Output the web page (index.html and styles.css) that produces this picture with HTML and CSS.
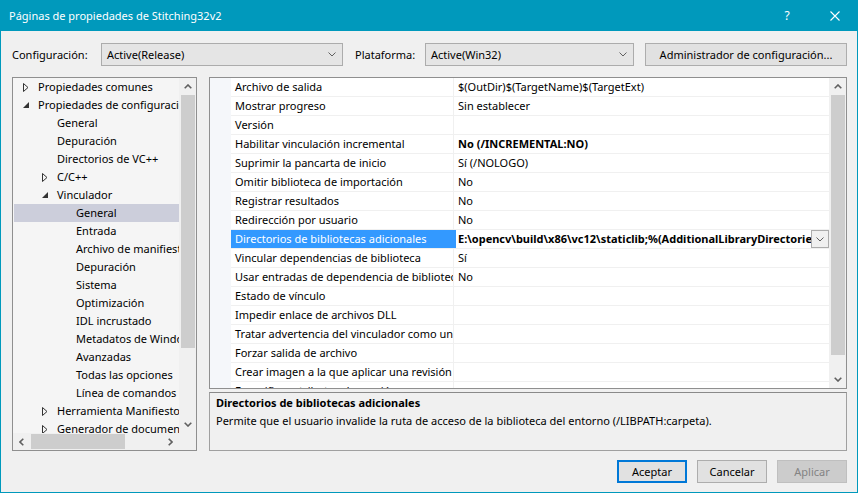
FILE: index.html
```html
<!DOCTYPE html>
<html lang="es">
<head>
<meta charset="utf-8">
<title>Páginas de propiedades de Stitching32v2</title>
<link rel="stylesheet" href="styles.css">
</head>
<body>
<div class="window">
  <div class="titlebar">
    <span class="title">Páginas de propiedades de Stitching32v2</span>
    <span class="capbtn help">?</span>
    <span class="capbtn close"><svg width="10" height="10" viewBox="0 0 10 10"><path d="M0.5 0.5 L9.5 9.5 M9.5 0.5 L0.5 9.5" stroke="#fff" stroke-width="1.1" fill="none"/></svg></span>
  </div>
  <div class="content">
    <div class="toolbar">
      <span class="lbl lbl-config">Configuración:</span>
      <div class="combo combo-config"><span>Active(Release)</span><svg class="chev" width="8" height="5" viewBox="0 0 8 5"><polyline points="0.5,0.5 4,4 7.5,0.5" fill="none" stroke="#606060" stroke-width="1"/></svg></div>
      <span class="lbl lbl-plat">Plataforma:</span>
      <div class="combo combo-plat"><span>Active(Win32)</span><svg class="chev" width="8" height="5" viewBox="0 0 8 5"><polyline points="0.5,0.5 4,4 7.5,0.5" fill="none" stroke="#606060" stroke-width="1"/></svg></div>
      <div class="btn btn-admin">Administrador de configuración...</div>
    </div>

    <div class="main">
      <div class="tree">
        <div class="tree-view">
          <div class="trow l0"><span class="tw"><svg width="6" height="9" viewBox="0 0 6 9"><polygon points="0.5,0.5 5,4.5 0.5,8.5" fill="none" stroke="#333" stroke-width="1"/></svg></span>Propiedades comunes</div>
          <div class="trow l0"><span class="tw"><svg width="7" height="7" viewBox="0 0 7 7"><polygon points="6,0 6,6 0,6" fill="#333"/></svg></span>Propiedades de configuración</div>
          <div class="trow l1"><span class="tw"></span>General</div>
          <div class="trow l1"><span class="tw"></span>Depuración</div>
          <div class="trow l1"><span class="tw"></span>Directorios de VC++</div>
          <div class="trow l1"><span class="tw"><svg width="6" height="9" viewBox="0 0 6 9"><polygon points="0.5,0.5 5,4.5 0.5,8.5" fill="none" stroke="#333" stroke-width="1"/></svg></span>C/C++</div>
          <div class="trow l1"><span class="tw"><svg width="7" height="7" viewBox="0 0 7 7"><polygon points="6,0 6,6 0,6" fill="#333"/></svg></span>Vinculador</div>
          <div class="trow l2 sel"><span class="tw"></span>General</div>
          <div class="trow l2"><span class="tw"></span>Entrada</div>
          <div class="trow l2"><span class="tw"></span>Archivo de manifiesto</div>
          <div class="trow l2"><span class="tw"></span>Depuración</div>
          <div class="trow l2"><span class="tw"></span>Sistema</div>
          <div class="trow l2"><span class="tw"></span>Optimización</div>
          <div class="trow l2"><span class="tw"></span>IDL incrustado</div>
          <div class="trow l2"><span class="tw"></span>Metadatos de Windows</div>
          <div class="trow l2"><span class="tw"></span>Avanzadas</div>
          <div class="trow l2"><span class="tw"></span>Todas las opciones</div>
          <div class="trow l2"><span class="tw"></span>Línea de comandos</div>
          <div class="trow l1"><span class="tw"><svg width="6" height="9" viewBox="0 0 6 9"><polygon points="0.5,0.5 5,4.5 0.5,8.5" fill="none" stroke="#333" stroke-width="1"/></svg></span>Herramienta Manifiesto</div>
          <div class="trow l1"><span class="tw"><svg width="6" height="9" viewBox="0 0 6 9"><polygon points="0.5,0.5 5,4.5 0.5,8.5" fill="none" stroke="#333" stroke-width="1"/></svg></span>Generador de documentos XML</div>
        </div>
        <div class="vscroll tree-vs">
          <div class="sarrow"><svg width="8" height="5" viewBox="0 0 8 5"><polyline points="0.7,4.3 4,1 7.3,4.3" fill="none" stroke="#606060" stroke-width="1.6"/></svg></div>
          <div class="vthumb tree-thumb"></div>
          <div class="strack"></div>
          <div class="sarrow"><svg width="8" height="5" viewBox="0 0 8 5"><polyline points="0.7,0.7 4,4 7.3,0.7" fill="none" stroke="#606060" stroke-width="1.6"/></svg></div>
        </div>
        <div class="hscroll">
          <div class="sarrow-h"><svg width="5" height="8" viewBox="0 0 5 8"><polyline points="4.3,0.7 1,4 4.3,7.3" fill="none" stroke="#606060" stroke-width="1.6"/></svg></div>
          <div class="hthumb"></div>
          <div class="strack"></div>
          <div class="sarrow-h"><svg width="5" height="8" viewBox="0 0 5 8"><polyline points="0.7,0.7 4,4 0.7,7.3" fill="none" stroke="#606060" stroke-width="1.6"/></svg></div>
        </div>
        <div class="corner"></div>
      </div>

      <div class="right">
        <div class="grid">
          <div class="grid-body">
            <div class="gutter"></div>
            <div class="props">
              <div class="prow"><div class="pname">Archivo de salida</div><div class="pval">$(OutDir)$(TargetName)$(TargetExt)</div></div>
              <div class="prow"><div class="pname">Mostrar progreso</div><div class="pval">Sin establecer</div></div>
              <div class="prow"><div class="pname">Versión</div><div class="pval"></div></div>
              <div class="prow"><div class="pname">Habilitar vinculación incremental</div><div class="pval b">No (/INCREMENTAL:NO)</div></div>
              <div class="prow"><div class="pname">Suprimir la pancarta de inicio</div><div class="pval">Sí (/NOLOGO)</div></div>
              <div class="prow"><div class="pname">Omitir biblioteca de importación</div><div class="pval">No</div></div>
              <div class="prow"><div class="pname">Registrar resultados</div><div class="pval">No</div></div>
              <div class="prow"><div class="pname">Redirección por usuario</div><div class="pval">No</div></div>
              <div class="prow sel"><div class="pname">Directorios de bibliotecas adicionales</div><div class="pval b edit"><span class="edit-text">E:\opencv\build\x86\vc12\staticlib;%(AdditionalLibraryDirectories)</span><span class="ddbtn"><svg width="8" height="5" viewBox="0 0 8 5"><polyline points="0.5,0.5 4,4 7.5,0.5" fill="none" stroke="#606060" stroke-width="1"/></svg></span></div></div>
              <div class="prow"><div class="pname">Vincular dependencias de biblioteca</div><div class="pval">Sí</div></div>
              <div class="prow"><div class="pname">Usar entradas de dependencia de biblioteca</div><div class="pval">No</div></div>
              <div class="prow"><div class="pname">Estado de vínculo</div><div class="pval"></div></div>
              <div class="prow"><div class="pname">Impedir enlace de archivos DLL</div><div class="pval"></div></div>
              <div class="prow"><div class="pname">Tratar advertencia del vinculador como un error</div><div class="pval"></div></div>
              <div class="prow"><div class="pname">Forzar salida de archivo</div><div class="pval"></div></div>
              <div class="prow"><div class="pname">Crear imagen a la que aplicar una revisión</div><div class="pval"></div></div>
              <div class="prow"><div class="pname">Especificar atributos de sección</div><div class="pval"></div></div>
            </div>
            <div class="vscroll grid-vs">
              <div class="sarrow"><svg width="8" height="5" viewBox="0 0 8 5"><polyline points="0.7,4.3 4,1 7.3,4.3" fill="none" stroke="#606060" stroke-width="1.6"/></svg></div>
              <div class="vthumb grid-thumb"></div>
              <div class="strack"></div>
              <div class="sarrow"><svg width="8" height="5" viewBox="0 0 8 5"><polyline points="0.7,0.7 4,4 7.3,0.7" fill="none" stroke="#606060" stroke-width="1.6"/></svg></div>
            </div>
          </div>
        </div>
        <div class="desc">
          <div class="desc-title">Directorios de bibliotecas adicionales</div>
          <div class="desc-text">Permite que el usuario invalide la ruta de acceso de la biblioteca del entorno (/LIBPATH:carpeta).</div>
        </div>
      </div>
    </div>

    <div class="buttons">
      <div class="btn dlg default">Aceptar</div>
      <div class="btn dlg">Cancelar</div>
      <div class="btn dlg disabled">Aplicar</div>
    </div>
  </div>
</div>
</body>
</html>
```

FILE: styles.css
```css
* { box-sizing: border-box; }
html, body { margin: 0; padding: 0; }
body {
  font-family: "Noto Sans", "Open Sans", sans-serif;
  font-size: 11px;
  color: #000;
  background: #fff;
}
.window {
  width: 858px;
  height: 493px;
  border: 1px solid #0099bc;
  border-top: 0;
  background: #f0f0f0;
  display: flex;
  flex-direction: column;
  overflow: hidden;
}
.titlebar {
  height: 31px;
  flex: none;
  margin: 0 -1px;
  background: #0099bc;
  color: #fff;
  display: flex;
  align-items: center;
  padding-left: 9px;
}
.title { flex: 1; font-size: 11px; }
.capbtn {
  width: 46px;
  height: 31px;
  display: flex;
  align-items: center;
  justify-content: center;
  font-size: 12px;
}
.help { padding-bottom: 1px; padding-right: 4px; }

.content {
  flex: 1;
  display: flex;
  flex-direction: column;
  padding: 12px 10px 0 11px;
}
.toolbar {
  height: 23px;
  display: flex;
  align-items: center;
}
.lbl { white-space: nowrap; }
.lbl-config { width: 89px; }
.lbl-plat { width: 70px; margin-left: 12px; }
.combo {
  height: 23px;
  border: 1px solid #acacac;
  background: #e5e5e5;
  display: flex;
  align-items: center;
  justify-content: space-between;
  padding: 0 6px 0 5px;
}
.combo-config { width: 242px; }
.combo-plat { width: 209px; }
.btn {
  height: 23px;
  border: 1px solid #adadad;
  background: #e1e1e1;
  display: flex;
  align-items: center;
  justify-content: center;
  white-space: nowrap;
}
.btn-admin { width: 202px; margin-left: 11px; }

.main {
  margin-top: 11px;
  height: 374px;
  display: flex;
  gap: 12px;
}
.tree {
  width: 185px;
  height: 374px;
  border: 1px solid #8f8f8f;
  display: grid;
  grid-template-columns: 166px 17px;
  grid-template-rows: 355px 17px;
}
.tree-view {
  background: #f5f5f5;
  overflow: hidden;
  padding-left: 1px;
}
.trow {
  height: 18px;
  line-height: 18px;
  white-space: nowrap;
  display: flex;
  align-items: center;
}
.trow.sel { background: #cccedb; }
.tw {
  width: 19px;
  flex: none;
  height: 18px;
  display: flex;
  align-items: center;
  padding-left: 4px;
}
.l0 { padding-left: 5px; }
.l1 { padding-left: 24px; }
.l2 { padding-left: 43px; }

.vscroll {
  background: #f0f0f0;
  display: flex;
  flex-direction: column;
}
.sarrow {
  height: 17px;
  flex: none;
  display: flex;
  align-items: center;
  justify-content: center;
}
.sarrow-h {
  width: 17px;
  flex: none;
  display: flex;
  align-items: center;
  justify-content: center;
}
.strack { flex: 1; }
.vthumb { background: #cdcdcd; margin: 0 1px 0 2px; flex: none; }
.tree-thumb { height: 253px; }
.grid-thumb { height: 260px; }
.hscroll {
  background: #f0f0f0;
  display: flex;
}
.hthumb { width: 94px; flex: none; background: #cdcdcd; margin: 1px 0 1px 1px; }
.corner { background: #f0f0f0; }

.right {
  width: 638px;
  display: flex;
  flex-direction: column;
  gap: 3px;
}
.grid {
  height: 312px;
  border: 1px solid #8f8f8f;
  background: #fff;
}
.grid-body {
  height: 310px;
  display: flex;
}
.gutter { width: 21px; flex: none; background: #f5f7fa; }
.props { flex: 1; overflow: hidden; }
.grid-vs { width: 17px; flex: none; }
.prow {
  height: 19px;
  display: flex;
  border-bottom: 1px solid #f0f0f0;
}
.pname {
  width: 223px;
  flex: none;
  border-right: 1px solid #f0f0f0;
  padding-left: 4px;
  line-height: 18px;
  white-space: nowrap;
  overflow: hidden;
}
.pval {
  flex: 1;
  padding-left: 4px;
  line-height: 18px;
  white-space: nowrap;
  overflow: hidden;
}
.b { font-weight: bold; }
.prow.sel .pname { background: #3399ff; color: #fff; border-right-color: #3399ff; }
.prow.sel .pval { box-shadow: inset 2px 0 0 #3399ff; }
.edit { display: flex; padding-right: 0; }
.edit-text { flex: 1; overflow: hidden; }
.ddbtn {
  width: 18px;
  height: 18px;
  flex: none;
  border: 1px solid #acacac;
  background: #f0f0f0;
  display: flex;
  align-items: center;
  justify-content: center;
}

.desc {
  height: 59px;
  border: 1px solid #a0a0a0;
  border-top-color: #8a8a8a;
  padding: 1px 6px 0 6px;
}
.desc-title { font-weight: bold; line-height: 18px; }
.desc-text { line-height: 18px; }

.buttons {
  margin-top: 9px;
  display: flex;
  justify-content: flex-end;
  gap: 10px;
}
.dlg { width: 70px; }
.default { border: 2px solid #0078d7; }
.disabled { background: #cccccc; border-color: #bfbfbf; color: #838383; }
```
